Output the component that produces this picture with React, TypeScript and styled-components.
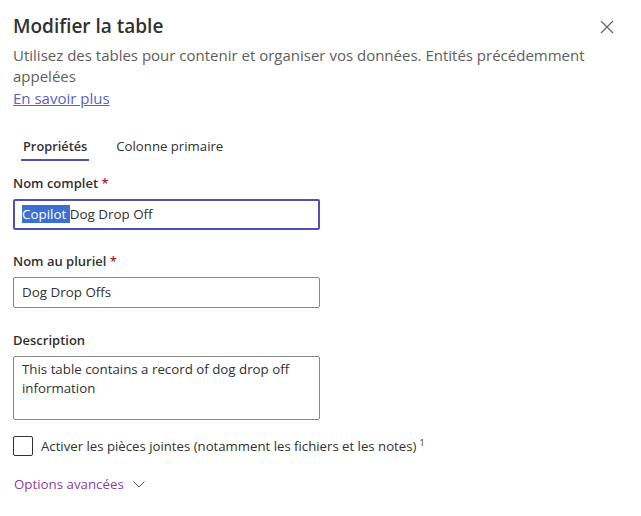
import React from 'react';
import styled, { createGlobalStyle } from 'styled-components';

const Global = createGlobalStyle`
  body {
    margin: 0;
    background: #ffffff;
    font-family: "Open Sans", "Noto Sans", sans-serif;
    color: #323130;
  }
`;

const Panel = styled.div`
  width: 641px;
  height: 516px;
  box-sizing: border-box;
  padding: 12px 13px 0 13px;
`;

const Header = styled.div`
  display: flex;
  justify-content: space-between;
  align-items: flex-start;
`;

const Title = styled.h1`
  margin: 0;
  font-size: 19px;
  font-weight: 600;
  line-height: 28px;
  color: #323130;
`;

const Close = styled.button`
  border: none;
  background: none;
  padding: 0;
  margin: 8px 14px 0 0;
  width: 14px;
  height: 14px;
  display: flex;
  cursor: pointer;
`;

const Intro = styled.p`
  margin: 5px 0 0 0;
  font-size: 15px;
  line-height: 21px;
  color: #605e5c;
  max-width: 590px;
`;

const Link = styled.a`
  display: inline-block;
  margin-top: 1px;
  font-size: 15px;
  line-height: 21px;
  color: #5b5fc7;
  text-decoration: underline;
`;

const Tabs = styled.div`
  display: flex;
  gap: 25px;
  margin: 27px 0 0 8px;
`;

const Tab = styled.div<{ $active?: boolean }>`
  font-size: ${(p) => (p.$active ? 12.8 : 13.2)}px;
  line-height: 20px;
  padding: 0 2px 3px;
  font-weight: ${(p) => (p.$active ? 600 : 400)};
  color: #323130;
  border-bottom: 2px solid ${(p) => (p.$active ? '#4f52b2' : 'transparent')};
`;

const Field = styled.div<{ $gap: number }>`
  display: flex;
  flex-direction: column;
  width: 307px;
  margin-top: ${(p) => p.$gap}px;
`;

const Label = styled.label`
  font-size: 13px;
  font-weight: 600;
  line-height: 20px;
  color: #323130;
  margin-bottom: 6px;
`;

const Star = styled.span`
  color: #a4262c;
`;

const Input = styled.div<{ $focused?: boolean }>`
  box-sizing: border-box;
  height: 31px;
  border: ${(p) => (p.$focused ? '2px solid #4f52b2' : '1px solid #8a8886')};
  border-radius: 2px;
  padding: 0 ${(p) => (p.$focused ? 7 : 8)}px;
  font-size: 13.4px;
  line-height: ${(p) => (p.$focused ? 27 : 29)}px;
  white-space: pre;
  color: #323130;
`;

const Selected = styled.span`
  background: #3a6fd6;
  color: #ffffff;
`;

const TextArea = styled.div`
  box-sizing: border-box;
  height: 64px;
  border: 1px solid #8a8886;
  border-radius: 2px;
  padding: 3px 8px;
  font-size: 13.3px;
  line-height: 19px;
  color: #323130;
`;

const CheckRow = styled.div`
  display: flex;
  align-items: center;
  gap: 8px;
  margin-top: 16px;
  font-size: 13.2px;
  line-height: 20px;
  color: #323130;
`;

const Box = styled.span`
  width: 20px;
  height: 20px;
  box-sizing: border-box;
  border: 1px solid #323130;
  border-radius: 2px;
`;

const Sup = styled.sup`
  font-size: 9px;
  margin-left: 3px;
  line-height: 0;
`;

const Advanced = styled.div`
  display: flex;
  align-items: center;
  gap: 9px;
  margin: 18px 0 0 1px;
  font-size: 13.3px;
  line-height: 20px;
  color: #8a3fa0;
`;

export default function App() {
  return (
    <>
      <Global />
      <Panel>
        <Header>
          <Title>Modifier la table</Title>
          <Close aria-label="Fermer">
            <svg width="14" height="14" viewBox="0 0 14 14">
              <path d="M1 1 L13 13 M13 1 L1 13" stroke="#605e5c" strokeWidth="1.1" />
            </svg>
          </Close>
        </Header>
        <Intro>
          Utilisez des tables pour contenir et organiser vos données. Entités précédemment appelées
        </Intro>
        <Link href="#">En savoir plus</Link>
        <Tabs>
          <Tab $active>Propriétés</Tab>
          <Tab>Colonne primaire</Tab>
        </Tabs>
        <Field $gap={12}>
          <Label>
            Nom complet <Star>*</Star>
          </Label>
          <Input $focused>
            <Selected>Copilot </Selected>Dog Drop Off
          </Input>
        </Field>
        <Field $gap={21}>
          <Label>
            Nom au pluriel <Star>*</Star>
          </Label>
          <Input>Dog Drop Offs</Input>
        </Field>
        <Field $gap={22}>
          <Label>Description</Label>
          <TextArea>This table contains a record of dog drop off information</TextArea>
        </Field>
        <CheckRow>
          <Box />
          <span>
            Activer les pièces jointes (notamment les fichiers et les notes)
            <Sup>1</Sup>
          </span>
        </CheckRow>
        <Advanced>
          Options avancées
          <svg width="12" height="7" viewBox="0 0 12 7">
            <path d="M0.5 0.5 L6 6 L11.5 0.5" stroke="#605e5c" strokeWidth="1" fill="none" />
          </svg>
        </Advanced>
      </Panel>
    </>
  );
}
